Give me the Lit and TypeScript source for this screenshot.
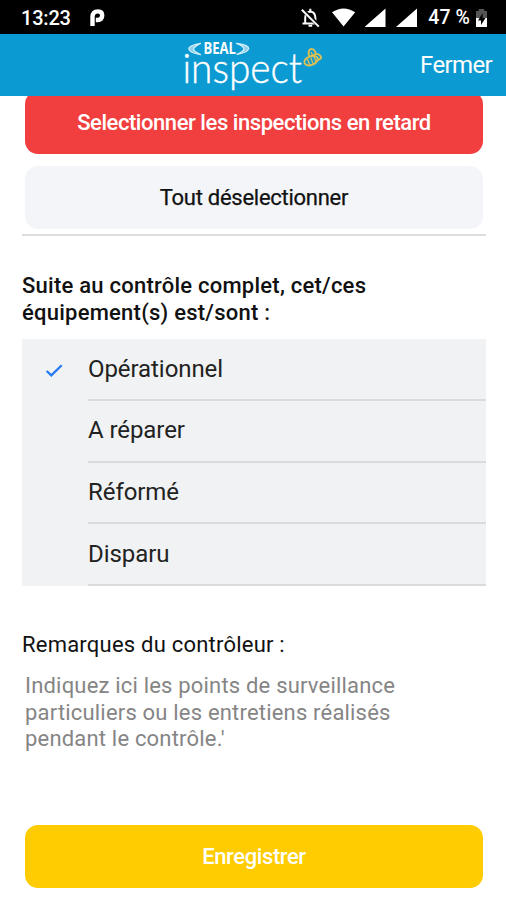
import { LitElement, html, css, svg } from "lit";
import { customElement, property, state } from "lit/decorators.js";

@customElement("status-bar")
class StatusBar extends LitElement {
  static styles = css`
    :host { display: flex; height: 34px; background: #000; color: #fff; align-items: center; box-sizing: border-box; padding: 1px 18px 0 21px; font: 500 20px/24px Roboto, sans-serif; }
    .time { width: 69px; letter-spacing: -0.2px; }
    .icons { display: block; margin-left: auto; }
    .p, .icons { flex: none; }
    .level { margin: 0 5px 0 10px; font-size: 19.5px; white-space: nowrap; letter-spacing: 0.1px; }
  `;
  render() {
    return html`
      <span class="time">13:23</span>
      <svg class="p" width="15" height="18" viewBox="0 0 15 18">
        <path d="M2.5 17V8Q2.5 2.4 8 2.4Q12.2 2.4 12.2 6.6Q12.2 11 7.6 11H5.8" fill="none" stroke="#fff" stroke-width="4.4" />
      </svg>
      <svg class="icons" width="118" height="22" viewBox="0 0 118 22">
        <g fill="none" stroke="#fff" stroke-width="2">
          <path d="M5.2 15.8V11Q5.2 5.2 10.3 4.4Q15.4 5.2 15.4 11V15.8M2.5 16.4H17.8" />
          <path d="M10.3 1.8V5M8.5 18.8H12.2" />
          <path d="M3 2.8L19 19.2" stroke="#000" stroke-width="4" />
          <path d="M1.8 2.8L18.8 19.6" />
        </g>
        <path d="M32 5.2Q43.6-2.4 55.2 5.2L43.6 19.4ZM85.5 1.5V20H64.5ZM117 1.5V20H96Z" fill="#fff" />
      </svg>
      <span class="level">47 %</span>
      <svg class="p" width="13" height="20" viewBox="0 0 13 20">
        <path d="M1 10V3H3.7V1H9.3V3H12V10Z" fill="#555" />
        <path d="M1 10H12V19H1Z" fill="#fff" />
        <path d="M7.6 5L3 12.5H6V17L10.5 10H7.6Z" fill="#000" />
      </svg>
    `;
  }
}

@customElement("app-header")
class AppHeader extends LitElement {
  static styles = css`
    :host { display: grid; grid-template-columns: 1fr 146px 1fr; height: 62px; background: #0c9ad3; color: #fff; align-items: center; }
    .logo { grid-column: 2; display: block; }
    .name { font: 300 41px Lato, sans-serif; }
    .brand { font: 700 15.5px "Open Sans", sans-serif; }
    .close { justify-self: end; margin-right: 14px; font: 400 24px/28px Roboto, sans-serif; letter-spacing: -0.65px; }
  `;
  render() {
    return html`
      <svg class="logo" width="146" height="62" viewBox="180 34 146 62">
        <g fill="#8fd0ec" stroke="#d9f0fa" stroke-width="1.2" stroke-linejoin="round">
          <path d="M200.5 43.4Q188.5 45.6 188.8 49Q189.5 53 200.5 54.6Q194 51.6 193.4 49.2Q194 46.6 200.5 43.4Z" />
          <path d="M236.5 43.4Q249 45 248.8 48.6Q247.5 52.6 237 54.4Q243.4 51.4 244 48.8Q243.4 46 236.5 43.4Z" />
        </g>
        ${svg`<text class="brand" x="203.5" y="54.2" fill="#fff" textLength="32.5" lengthAdjust="spacingAndGlyphs">BEAL</text>
        <text class="name" x="182.5" y="82.8" fill="#fff" stroke="#fff" stroke-width=".4" textLength="119.5" lengthAdjust="spacingAndGlyphs">inspect</text>`}
        <g fill="none" stroke="#dcc154" stroke-width="1.9" stroke-linejoin="round">
          <ellipse cx="311" cy="60.6" rx="7" ry="4.4" transform="rotate(-22 311 60.6)" />
          <path d="M309.5 57.5Q307 50 311.2 48.9Q315 49 316 54.6M313 57Q315 52 319.5 55Q323.5 58 318 60.2" />
          <path d="M307.6 59L309.6 65M310.8 57.5L313 63.6M314 56.5L316 61.8M311 52L313 56" stroke-width="1.3" />
        </g>
      </svg>
      <span class="close">Fermer</span>
    `;
  }
}

@customElement("choice-list")
class ChoiceList extends LitElement {
  @property({ type: Array }) options: string[] = [];
  @state() selected = 0;
  static styles = css`
    :host { display: block; background: #f0f2f3; }
    .row { display: flex; height: 61.75px; }
    .mark { width: 66px; flex: none; }
    .check { display: block; margin: 24px 0 0 23px; }
    .label { flex: 1; box-sizing: border-box; border-bottom: 2px solid #d9dbdc; padding-top: 15.5px; font: 400 24px/28px Roboto, sans-serif; color: #222; letter-spacing: -0.07px; }
  `;
  render() {
    return this.options.map(
      (option, i) => html`
        <div class="row" @click=${() => (this.selected = i)}>
          <div class="mark">
            ${i === this.selected
              ? html`<svg class="check" width="19" height="16" viewBox="0 0 19 16"><path d="M1.7 8L6.3 12.4L16.7 2.3" fill="none" stroke="#2879f5" stroke-width="2.3" /></svg>`
              : ""}
          </div>
          <div class="label">${option}</div>
        </div>
      `
    );
  }
}

@customElement("app-root")
class AppRoot extends LitElement {
  static styles = css`
    :host { display: flex; flex-direction: column; height: 900px; overflow: hidden; background: #fff; color: #111; font-family: Roboto, sans-serif; }
    .content { flex: 1; min-height: 0; overflow: hidden; padding: 0 20px 0 22px; }
    .btn { display: block; box-sizing: border-box; width: 458px; height: 63px; margin: 0 0 0 3px; padding: 0; border: 0; border-radius: 13px; font: 500 22px/63px Roboto, sans-serif; text-align: center; color: #fff; }
    .late { background: #f13f40; margin-top: -5.4px; letter-spacing: -0.44px; }
    .none { background: #f3f5f9; color: #111; margin-top: 12.4px; font-weight: 400; line-height: 61px; letter-spacing: -0.27px; -webkit-text-stroke: 0.25px #111; }
    .save { background: #fecc00; letter-spacing: -0.4px; }
    .rule { height: 2px; background: #dedede; margin-top: 5px; }
    .question { margin: 36px 0 13px; font: 500 22px/27px Roboto, sans-serif; letter-spacing: 0.24px; }
    .caption { margin: 45px 0 0; font: 400 22px/27px Roboto, sans-serif; letter-spacing: 0.22px; }
    .note { margin: 14.8px 0 72.2px 3px; font: 400 22px/26.8px Roboto, sans-serif; letter-spacing: 0.19px; color: #858585; }
    .line { display: block; white-space: nowrap; }
  `;
  render() {
    return html`
      <status-bar></status-bar>
      <app-header></app-header>
      <div class="content">
        <button class="btn late">Selectionner les inspections en retard</button>
        <button class="btn none">Tout déselectionner</button>
        <div class="rule"></div>
        <div class="question">
          <span class="line">Suite au contrôle complet, cet/ces</span>
          <span class="line">équipement(s) est/sont :</span>
        </div>
        <choice-list .options=${["Opérationnel", "A réparer", "Réformé", "Disparu"]}></choice-list>
        <div class="caption">Remarques du contrôleur :</div>
        <div class="note">
          <span class="line">Indiquez ici les points de surveillance</span>
          <span class="line">particuliers ou les entretiens réalisés</span>
          <span class="line">pendant le contrôle.'</span>
        </div>
        <button class="btn save">Enregistrer</button>
      </div>
    `;
  }
}
